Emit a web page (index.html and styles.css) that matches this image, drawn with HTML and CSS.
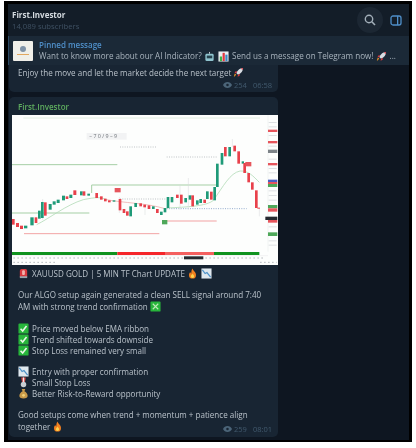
FILE: index.html
```html
<!DOCTYPE html>
<html>
  <head>
    <link rel="stylesheet" href="styles.css">
  </head>
  <body>
    <svg class="defs" width="0" height="0">
      <symbol id="rocket" viewBox="0 0 12 12">
        <path d="M11 1C8 1 5 3 3.500 6.500l2 2C9 7 11 4 11 1z" fill="#d8dde3"/>
        <path d="M11 1L8.600 1.500l1.900 1.900z" fill="#d9363e"/>
        <path d="M3.500 6.500L1.500 7l1-2.200 2-.3zM5.500 8.500L5 10.500l2.200-1 .3-2z" fill="#d9363e"/>
        <path d="M3.500 8.500L1 11l.6-3 1.200-.5z" fill="#f59a23"/>
      </symbol>
      <symbol id="robot" viewBox="0 0 12 12">
        <rect x="1.500" y="3" width="9" height="8" rx="1.500" fill="#8fc4cf"/>
        <rect x="3" y="5" width="6" height="3" fill="#26414d"/>
        <rect x="5.500" y="1" width="1" height="2" fill="#ccd6dd"/>
      </symbol>
      <symbol id="bars" viewBox="0 0 12 12">
        <rect x="0.500" y="0.500" width="11" height="11" fill="#e9eef2"/>
        <rect x="2" y="6" width="2.400" height="5" fill="#3bb54a"/>
        <rect x="5" y="2" width="2.400" height="9" fill="#e2383f"/>
        <rect x="8" y="4" width="2.400" height="7" fill="#3b88c3"/>
      </symbol>
      <symbol id="siren" viewBox="0 0 12 12">
        <rect x="2" y="1" width="8" height="10" rx="2" fill="#d93a3f"/>
        <rect x="4.500" y="2.500" width="3" height="5" rx="1" fill="#f3b3ac"/>
        <rect x="2" y="9" width="8" height="2" fill="#9aa5ad"/>
      </symbol>
      <symbol id="fire" viewBox="0 0 12 12">
        <path d="M6 .5c.5 2.500 3.800 3.600 3.800 7A3.800 3.800 0 0 1 6 11.500 3.800 3.800 0 0 1 2.200 7.500c0-1.500.8-2.500 1.500-3.200.1 1 .5 1.500 1 1.700C4.600 4 5 2 6 .5z" fill="#f4801f"/>
        <path d="M6 6c.3 1 1.800 1.600 1.800 3.100A1.800 1.800 0 0 1 6 11a1.800 1.800 0 0 1-1.800-1.900C4.200 7.800 5.600 7.200 6 6z" fill="#fcd34d"/>
      </symbol>
      <symbol id="down" viewBox="0 0 12 12">
        <rect x="0.500" y="0.500" width="11" height="11" fill="#dfe8ee"/>
        <path d="M1.500 2l3 4 2-1 4 5" fill="none" stroke="#4f93c9" stroke-width="1.300"/>
      </symbol>
      <symbol id="check" viewBox="0 0 12 12">
        <rect x="0.500" y="0.500" width="11" height="11" rx="1" fill="#27b53b"/>
        <path d="M2.800 6.200l2.300 2.500 4.200-5.400" fill="none" stroke="#e9f7e6" stroke-width="1.700"/>
      </symbol>
      <symbol id="cross" viewBox="0 0 12 12">
        <rect x="0.500" y="0.500" width="11" height="11" rx="1" fill="#27b53b"/>
        <path d="M3 3l6 6M9 3L3 9" fill="none" stroke="#bfe9b8" stroke-width="1.200"/>
      </symbol>
      <symbol id="medal" viewBox="0 0 12 12">
        <path d="M3.500 .5h5L7.500 6h-3z" fill="#d94a4a"/>
        <path d="M5.300 .5h1.400V6H5.300z" fill="#eee"/>
        <circle cx="6" cy="8.300" r="3" fill="#c9ced3"/>
      </symbol>
      <symbol id="bag" viewBox="0 0 12 12">
        <path d="M4 1h4L7 3.500c2 1 3.500 3 3.500 5 0 2-1.500 3-4.500 3s-4.500-1-4.500-3c0-2 1.500-4 3.500-5z" fill="#c99a4a"/>
        <circle cx="6" cy="8" r="1.500" fill="#f2d27a"/>
      </symbol>
      <symbol id="eye" viewBox="0 0 12 8">
        <path d="M6 0C3.400 0 1.200 1.600 0 4c1.200 2.400 3.400 4 6 4s4.800-1.600 6-4c-1.200-2.400-3.400-4-6-4z" fill="#4c6579"/>
        <circle cx="6" cy="4" r="1.700" fill="#182533"/>
      </symbol>
    </svg>

    <div class="frame">
      <div class="topbar">
        <div class="channel">
          <div class="channel-name">First.Investor</div>
          <div class="channel-subs">14,089 subscribers</div>
        </div>
        <div class="search-btn">
          <svg width="12" height="12" viewBox="0 0 12 12"><circle cx="5" cy="5" r="3.700" fill="none" stroke="#a3afb9" stroke-width="1.400"/><path d="M7.800 7.800L11 11" stroke="#a3afb9" stroke-width="1.600"/></svg>
        </div>
        <svg class="side-icon" width="12" height="11" viewBox="0 0 12 11"><rect x="1" y="1" width="10" height="9" rx="2" fill="none" stroke="#4f8fc9" stroke-width="1.300"/><rect x="7" y="1" width="1.300" height="9" fill="#4f8fc9"/></svg>
      </div>

      <div class="pinned">
        <div class="pinned-thumb"><span class="thumb-dot"></span><span class="thumb-line"></span></div>
        <div class="pinned-text">
          <div class="pinned-title">Pinned message</div>
          <div class="pinned-msg">Want to know more about our AI Indicator? <svg class="emoji"><use href="#robot"/></svg> <svg class="emoji"><use href="#bars"/></svg> Send us a message on Telegram now! <svg class="emoji"><use href="#rocket"/></svg> ...</div>
        </div>
      </div>

      <div class="chat">
        <div class="bubble bubble-short">
          <div class="line">Enjoy the move and let the market decide the next target <svg class="emoji"><use href="#rocket"/></svg></div>
          <div class="meta meta-short"><svg class="eye"><use href="#eye"/></svg> 254 <span class="time">06:58</span></div>
        </div>

        <div class="bubble">
          <div class="sender">First.Investor</div>
          <svg class="chart" width="266" height="150" viewBox="36 16 798 450">
            <rect class="c-bg" x="36" y="16" width="798" height="450"/>
            <rect class="c-tool" x="260" y="70" width="120" height="20"/>
            <text class="c-tooltext" x="268" y="84">– 7 0 / 9 – 9</text>
            <path class="l-green" d="M36 165H352M36 310H268M275 250V226H650"/>
            <path class="l-top" d="M70 25H780"/>
            <path class="l-red" d="M72 372H478M500 334H650"/>
            <path class="l-dots" d="M360 112H470M500 142H650M360 268H500"/>
            <path class="l-bluedots" d="M500 297H740"/>
            <path class="l-ema" d="M110 345C150 325 200 285 250 270C290 262 300 262 320 270M500 295C560 292 620 290 640 272C670 230 690 190 720 184C745 182 760 200 778 218"/>
            <path class="l-rib" d="M320 270C370 280 440 280 495 297"/>
            <path class="l-wick" d="M565 205V300M697 88V112M540 225V300M358 262V310M435 290V316M778 295V320M128 268V330"/>
            <g class="up">
              <rect x="72" y="348" width="10" height="8"/><rect x="91" y="323" width="10" height="24"/>
              <rect x="114" y="303" width="8" height="24"/><rect x="123" y="277" width="8" height="48"/>
              <rect x="146" y="283" width="9" height="17"/><rect x="158" y="275" width="9" height="10"/>
              <rect x="170" y="270" width="9" height="10"/><rect x="186" y="258" width="9" height="14"/>
              <rect x="208" y="255" width="9" height="10"/><rect x="240" y="245" width="8" height="12"/>
              <rect x="262" y="252" width="8" height="6"/><rect x="338" y="272" width="8" height="4"/>
              <rect x="388" y="290" width="8" height="30"/><rect x="403" y="280" width="8" height="12"/>
              <rect x="456" y="290" width="8" height="8"/><rect x="480" y="306" width="8" height="10"/>
              <rect x="491" y="295" width="8" height="13"/><rect x="500" y="262" width="8" height="33"/>
              <rect x="512" y="262" width="8" height="16"/><rect x="553" y="265" width="8" height="13"/>
              <rect x="566" y="257" width="8" height="13"/><rect x="588" y="272" width="8" height="13"/>
              <rect x="598" y="268" width="8" height="12"/><rect x="618" y="245" width="8" height="23"/>
              <rect x="640" y="232" width="8" height="40"/><rect x="648" y="162" width="8" height="70"/>
              <rect x="662" y="130" width="8" height="35"/><rect x="685" y="112" width="8" height="28"/>
              <rect x="725" y="155" width="7" height="7"/>
            </g>
            <g class="down">
              <rect x="36" y="328" width="8" height="17"/><rect x="48" y="340" width="9" height="12"/>
              <rect x="60" y="348" width="9" height="10"/><rect x="104" y="323" width="8" height="17"/>
              <rect x="132" y="278" width="8" height="40"/><rect x="197" y="260" width="8" height="8"/>
              <rect x="220" y="242" width="9" height="14"/><rect x="248" y="245" width="8" height="13"/>
              <rect x="286" y="250" width="8" height="15"/><rect x="300" y="260" width="8" height="10"/>
              <rect x="312" y="267" width="8" height="8"/><rect x="324" y="272" width="8" height="6"/>
              <rect x="356" y="268" width="8" height="34"/><rect x="368" y="298" width="8" height="12"/>
              <rect x="378" y="305" width="8" height="13"/><rect x="418" y="281" width="8" height="9"/>
              <rect x="430" y="285" width="8" height="8"/><rect x="443" y="287" width="8" height="11"/>
              <rect x="468" y="298" width="8" height="12"/><rect x="528" y="255" width="8" height="10"/>
              <rect x="540" y="255" width="8" height="27"/><rect x="574" y="257" width="8" height="33"/>
              <rect x="610" y="270" width="8" height="10"/><rect x="630" y="246" width="8" height="24"/>
              <rect x="672" y="112" width="8" height="28"/><rect x="700" y="108" width="8" height="17"/>
              <rect x="712" y="125" width="8" height="37"/><rect x="730" y="160" width="8" height="30"/>
              <rect x="742" y="190" width="8" height="28"/><rect x="753" y="218" width="8" height="22"/>
              <rect x="765" y="242" width="8" height="53"/><rect x="772" y="294" width="8" height="3"/>
            </g>
            <rect class="tag-red" x="344" y="235" width="18" height="13"/>
            <rect class="tag-red" x="736" y="157" width="18" height="13"/>
            <rect class="tag-green" x="486" y="331" width="16" height="13"/>
            <path class="l-axis" d="M804 16V426M36 438H804"/>
            <g class="axis-ticks">
              <rect x="806" y="37" width="24" height="3"/><rect x="806" y="50" width="24" height="3"/>
              <rect x="806" y="76" width="24" height="3"/><rect x="806" y="108" width="24" height="3"/>
              <rect x="806" y="147" width="24" height="3"/>
              <rect x="806" y="175" width="24" height="3"/><rect x="806" y="188" width="24" height="3"/>
              <rect x="806" y="242" width="24" height="3"/><rect x="806" y="256" width="24" height="3"/>
              <rect x="806" y="270" width="24" height="3"/><rect x="806" y="350" width="24" height="3"/>
              <rect x="806" y="392" width="24" height="3"/><rect x="806" y="405" width="24" height="3"/>
            </g>
            <rect class="tag-red" x="804" y="60" width="28" height="7"/>
            <rect class="tag-red" x="804" y="94" width="28" height="7"/>
            <rect class="tag-gray" x="804" y="120" width="28" height="10"/>
            <rect class="tag-red" x="804" y="160" width="28" height="7"/>
            <rect class="tag-blue" x="804" y="210" width="28" height="8"/>
            <rect class="tag-red" x="804" y="217" width="28" height="6"/>
            <rect class="tag-green" x="804" y="223" width="28" height="9"/>
            <rect class="tag-green" x="804" y="286" width="28" height="10"/>
            <rect class="tag-red" x="804" y="296" width="28" height="10"/>
            <rect class="tag-dark" x="796" y="321" width="36" height="10"/>
            <rect class="tag-red" x="804" y="331" width="28" height="8"/>
            <rect class="tag-green" x="804" y="368" width="28" height="11"/>
            <rect class="band-green" x="36" y="427" width="316" height="9"/>
            <rect class="band-red" x="352" y="427" width="143" height="9"/>
            <rect class="band-soft" x="495" y="427" width="147" height="9"/>
            <rect class="band-green" x="642" y="427" width="136" height="9"/>
            <path class="axis-dots" d="M40 445H790"/>
            <rect class="tag-dark" x="552" y="440" width="58" height="9"/>
            <path class="axis-dots" d="M40 458H165M780 458H830"/>
          </svg>

          <div class="text">
            <div class="line"><svg class="emoji"><use href="#siren"/></svg> XAUUSD GOLD | 5 MIN TF Chart UPDATE <svg class="emoji"><use href="#fire"/></svg> <svg class="emoji"><use href="#down"/></svg></div>
            <div class="line blank"></div>
            <div class="line">Our ALGO setup again generated a clean SELL signal around 7:40</div>
            <div class="line">AM with strong trend confirmation <svg class="emoji"><use href="#cross"/></svg></div>
            <div class="line blank"></div>
            <div class="line"><svg class="emoji"><use href="#check"/></svg> Price moved below EMA ribbon</div>
            <div class="line"><svg class="emoji"><use href="#check"/></svg> Trend shifted towards downside</div>
            <div class="line"><svg class="emoji"><use href="#check"/></svg> Stop Loss remained very small</div>
            <div class="line blank"></div>
            <div class="line"><svg class="emoji"><use href="#down"/></svg> Entry with proper confirmation</div>
            <div class="line"><svg class="emoji"><use href="#medal"/></svg> Small Stop Loss</div>
            <div class="line"><svg class="emoji"><use href="#bag"/></svg> Better Risk-to-Reward opportunity</div>
            <div class="line blank"></div>
            <div class="line">Good setups come when trend + momentum + patience align</div>
            <div class="line">together <svg class="emoji"><use href="#fire"/></svg></div>
          </div>
          <div class="meta meta-long"><svg class="eye"><use href="#eye"/></svg> 259 <span class="time">08:01</span></div>
        </div>
      </div>
    </div>
  </body>
</html>
```

FILE: styles.css
```css
html,
body {
  margin: 0;
  padding: 0;
  background-color: white;
}

body {
  width: 416px;
  height: 448px;
  overflow: hidden;
  font-family: "Open Sans", "Noto Sans", sans-serif;
}

.defs {
  display: block;
  height: 0;
}

.frame {
  box-sizing: border-box;
  width: 408px;
  height: 441px;
  margin: 1px 0 0 4px;
  border: solid black;
  border-width: 3px 3px 2px 4px;
  background-color: #0e1621;
  display: flex;
  flex-direction: column;
  overflow: hidden;
  filter: blur(0.4px);
}

.topbar {
  height: 32px;
  flex: none;
  background-color: #131d28;
  display: flex;
  align-items: center;
  padding-left: 4px;
}

.channel {
  flex: 1;
}

.channel-name {
  font-size: 8px;
  font-weight: 700;
  line-height: 11px;
  color: #d5dbe0;
}

.channel-subs {
  font-size: 7.7px;
  line-height: 12px;
  color: #3f5163;
}

.search-btn {
  width: 26px;
  height: 26px;
  border-radius: 50%;
  background-color: #1c2733;
  display: flex;
  align-items: center;
  justify-content: center;
  margin-right: 7px;
}

.side-icon {
  margin-right: 7px;
}

.pinned {
  height: 29px;
  flex: none;
  box-sizing: border-box;
  background-color: #1b2937;
  border-left: 1px solid #2d4a63;
  display: flex;
  align-items: center;
  padding-left: 4px;
  gap: 6px;
}

.pinned-thumb {
  width: 20px;
  height: 20px;
  background-color: #f0efe9;
  border-radius: 1px;
  display: flex;
  flex-direction: column;
  align-items: center;
  justify-content: center;
  gap: 2px;
}

.thumb-dot {
  width: 6px;
  height: 6px;
  border-radius: 50%;
  background-color: #7f93a8;
}

.thumb-line {
  width: 12px;
  height: 1px;
  background-color: #e2a860;
}

.pinned-title {
  font-size: 8px;
  font-weight: 600;
  line-height: 11px;
  color: #4f8fc9;
}

.pinned-msg {
  font-size: 8.1px;
  line-height: 11px;
  color: #a9b4be;
  white-space: nowrap;
}

.chat {
  flex: 1;
  display: flex;
  flex-direction: column;
  gap: 5px;
  padding-left: 1px;
  background-color: #0e1621;
}

.bubble {
  width: 269px;
  box-sizing: border-box;
  background-color: #182533;
  border-radius: 5px;
  padding: 0 0 0 3px;
  position: relative;
  height: 340px;
}

.bubble-short {
  height: 27px;
  padding: 2px 0 0 9px;
  border-radius: 0 0 5px 5px;
}

.line {
  font-size: 8.05px;
  line-height: 10.95px;
  height: 10.95px;
  color: #b9c2ca;
  white-space: nowrap;
}

.sender {
  font-size: 8px;
  font-weight: 600;
  line-height: 11px;
  height: 18px;
  padding: 4px 0 0 6px;
  box-sizing: border-box;
  color: #5fae5f;
}

.chart {
  display: block;
}

.text {
  padding: 3px 0 0 6px;
}

.emoji {
  width: 11px;
  height: 11px;
  margin-right: 1px;
  vertical-align: -2.5px;
}

.meta {
  font-size: 7.5px;
  line-height: 10px;
  color: #425a6e;
  display: flex;
  align-items: center;
  justify-content: flex-end;
  gap: 2px;
  position: absolute;
  right: 6px;
}

.meta-short {
  bottom: 2px;
}

.meta-long {
  bottom: 3px;
}

.eye {
  width: 9px;
  height: 6px;
}

.time {
  margin-left: 4px;
}

.c-bg {
  fill: #fdfefd;
}

.c-tool {
  fill: #f2f3f4;
}

.c-tooltext {
  font-size: 16px;
  fill: #6e7378;
}

.l-green,
.l-top,
.l-red,
.l-dots,
.l-bluedots,
.l-ema,
.l-rib,
.l-wick,
.l-axis,
.axis-dots {
  fill: none;
}

.l-green {
  stroke: #a5cfa5;
  stroke-width: 3;
}

.l-top {
  stroke: #d6e8d6;
  stroke-width: 2;
}

.l-red {
  stroke: #ef9090;
  stroke-width: 2.5;
}

.l-dots {
  stroke: #b5b9bd;
  stroke-width: 2.5;
  stroke-dasharray: 3 4;
}

.l-bluedots {
  stroke: #7f9cc4;
  stroke-width: 2.5;
  stroke-dasharray: 3 4;
}

.l-ema {
  stroke: #b4dcb9;
  stroke-width: 2.5;
}

.l-rib {
  stroke: #eeb0b0;
  stroke-width: 2.5;
}

.l-wick {
  stroke: #d5d8db;
  stroke-width: 1.5;
}

.l-axis {
  stroke: #e6e8ea;
  stroke-width: 1.5;
}

.up {
  fill: #1f9a78;
}

.down {
  fill: #e8414b;
}

.axis-ticks {
  fill: #dde0e3;
}

.tag-red {
  fill: #e6555c;
}

.tag-green {
  fill: #4fa85a;
}

.tag-gray {
  fill: #7d8388;
}

.tag-blue {
  fill: #4a5fc4;
}

.tag-dark {
  fill: #262a30;
}

.band-green {
  fill: #10931f;
}

.band-red {
  fill: #f5262a;
}

.band-soft {
  fill: #f4605f;
}

.axis-dots {
  stroke: #b8bcc0;
  stroke-width: 3;
  stroke-dasharray: 5 7;
}
```
